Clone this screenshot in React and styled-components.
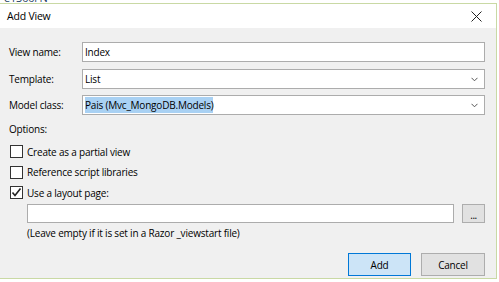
import React from 'react'
import styled, { createGlobalStyle } from 'styled-components'

const Global = createGlobalStyle`
  html, body {
    margin: 0;
    padding: 0;
    background: #ffffff;
  }
  body {
    font-family: "Open Sans", "Noto Sans", sans-serif;
    font-size: 10px;
    letter-spacing: -0.2px;
    color: #000000;
  }
`

const BehindStrip = styled.div`
  height: 3px;
  overflow: hidden;
  background: #ffffff;
  padding-left: 4px;
`

const BehindText = styled.div`
  margin-top: -8px;
  font-size: 11px;
  line-height: 11px;
  color: #1e3f66;
`

const Dialog = styled.div`
  width: 497px;
  height: 276px;
  box-sizing: border-box;
  border-top: 1px solid #c9d9a4;
  border-right: 1px solid #c9d9a4;
  border-bottom: 1px solid #c9d9a4;
  background: #f0f0f0;
`

const TitleBar = styled.div`
  height: 24px;
  background: #ffffff;
  display: flex;
  align-items: center;
  justify-content: space-between;
  padding: 0 14px 0 7px;
`

const Title = styled.span`
  font-size: 10.5px;
  color: #000000;
`

const Body = styled.div`
  padding: 14px 11px 0 9px;
  display: flex;
  flex-direction: column;
`

const FieldRow = styled.div`
  display: flex;
  align-items: center;
  height: 20px;
  margin-bottom: ${p => p.gap || 7}px;
`

const Label = styled.label`
  width: 73px;
  flex-shrink: 0;
`

const Box = styled.div`
  flex: 1;
  height: 100%;
  box-sizing: border-box;
  background: #ffffff;
  border: 1px solid #acacac;
  display: flex;
  align-items: center;
  padding: 0 6px 0 2px;
`

const Selected = styled.span`
  background: #a9d1f3;
  padding: 1px 0;
`

const Grow = styled.span`
  flex: 1;
`

const OptionsLabel = styled.div`
  height: 14px;
  line-height: 14px;
  margin: 1px 0 9px;
`

const CheckRow = styled.div`
  display: flex;
  align-items: center;
  height: 13px;
  margin: 0 0 ${p => p.gap ?? 7.5}px 1px;
  gap: 4px;
`

const CheckBox = styled.span`
  width: 13px;
  height: 13px;
  box-sizing: border-box;
  border: 1px solid #333333;
  background: #ffffff;
  display: flex;
  align-items: center;
  justify-content: center;
`

const Indented = styled.div`
  padding-left: 18px;
  display: flex;
  flex-direction: column;
`

const PathRow = styled.div`
  display: flex;
  align-items: center;
  gap: 8px;
  height: 19px;
`

const PathInput = styled.div`
  flex: 1;
  height: 19px;
  box-sizing: border-box;
  background: #ffffff;
  border: 1px solid #acacac;
`

const Browse = styled.div`
  width: 23px;
  height: 19px;
  box-sizing: border-box;
  background: #e1e1e1;
  border: 1px solid #adadad;
  display: flex;
  align-items: flex-end;
  justify-content: center;
  font-size: 10px;
  line-height: 13px;
  letter-spacing: -0.5px;
`

const Hint = styled.div`
  margin-top: 3px;
  height: 15px;
  line-height: 15px;
`

const Footer = styled.div`
  display: flex;
  justify-content: flex-end;
  gap: 10px;
  margin-top: 12px;
`

const Button = styled.div`
  width: ${p => p.w}px;
  height: 23px;
  box-sizing: border-box;
  display: flex;
  align-items: center;
  justify-content: center;
  background: ${p => (p.primary ? '#cce4f7' : '#e1e1e1')};
  border: 1px solid ${p => (p.primary ? '#0078d7' : '#adadad')};
`

const Chevron = () => (
  <svg width="7" height="5" viewBox="0 0 7 5">
    <path d="M0.5 0.8 L3.5 3.8 L6.5 0.8" fill="none" stroke="#555" strokeWidth="1" />
  </svg>
)

const CloseIcon = () => (
  <svg width="11" height="11" viewBox="0 0 11 11">
    <path d="M0.5 0.5 L10.5 10.5 M10.5 0.5 L0.5 10.5" stroke="#222" strokeWidth="1" />
  </svg>
)

const Tick = () => (
  <svg width="11" height="11" viewBox="0 0 11 11">
    <path d="M1.5 5.5 L4 8.5 L9.5 1.5" fill="none" stroke="#222" strokeWidth="1.6" />
  </svg>
)

export default function App () {
  return (
    <>
      <Global />
      <BehindStrip>
        <BehindText>e1300i N</BehindText>
      </BehindStrip>
      <Dialog>
        <TitleBar>
          <Title>Add View</Title>
          <CloseIcon />
        </TitleBar>
        <Body>
          <FieldRow>
            <Label>View name:</Label>
            <Box>Index</Box>
          </FieldRow>
          <FieldRow gap={6}>
            <Label>Template:</Label>
            <Box><Grow>List</Grow><Chevron /></Box>
          </FieldRow>
          <FieldRow gap={6}>
            <Label>Model class:</Label>
            <Box><Grow><Selected>Pais (Mvc_MongoDB.Models)</Selected></Grow><Chevron /></Box>
          </FieldRow>
          <OptionsLabel>Options:</OptionsLabel>
          <CheckRow>
            <CheckBox />
            <span>Create as a partial view</span>
          </CheckRow>
          <CheckRow>
            <CheckBox />
            <span>Reference script libraries</span>
          </CheckRow>
          <CheckRow gap={5}>
            <CheckBox><Tick /></CheckBox>
            <span>Use a layout page:</span>
          </CheckRow>
          <Indented>
            <PathRow>
              <PathInput />
              <Browse>...</Browse>
            </PathRow>
            <Hint>(Leave empty if it is set in a Razor _viewstart file)</Hint>
          </Indented>
          <Footer>
            <Button primary w={63}>Add</Button>
            <Button w={64}>Cancel</Button>
          </Footer>
        </Body>
      </Dialog>
    </>
  )
}
